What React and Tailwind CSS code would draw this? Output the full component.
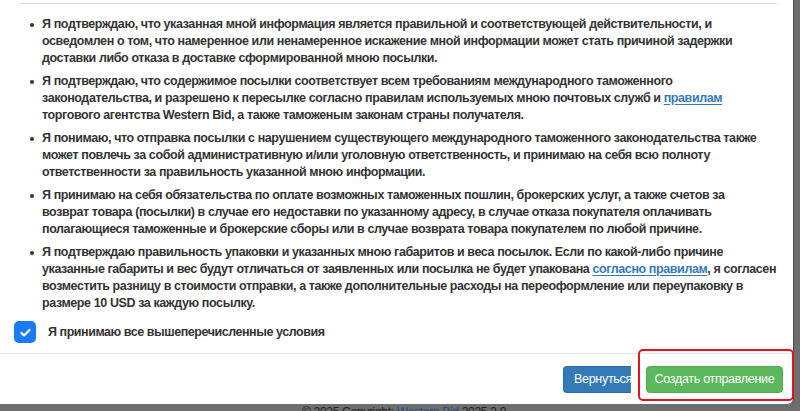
import React from "react";

const Link = ({ children }) => (
  <a href="#" className="text-[#337ab7] underline underline-offset-2">
    {children}
  </a>
);

// each item is kept with the same line breaks as the form
const items = [
  [
    "Я подтверждаю, что указанная мной информация является правильной и соответствующей действительности, и",
    "осведомлен о том, что намеренное или ненамеренное искажение мной информации может стать причиной задержки",
    "доставки либо отказа в доставке сформированной мною посылки.",
  ],
  [
    "Я подтверждаю, что содержимое посылки соответствует всем требованиям международного таможенного",
    <>законодательства, и разрешено к пересылке согласно правилам используемых мною почтовых служб и <Link>правилам</Link></>,
    "торгового агентства Western Bid, а также таможеным законам страны получателя.",
  ],
  [
    "Я понимаю, что отправка посылки с нарушением существующего международного таможенного законодательства также",
    "может повлечь за собой административную и/или уголовную ответственность, и принимаю на себя всю полноту",
    "ответственности за правильность указанной мною информации.",
  ],
  [
    "Я принимаю на себя обязательства по оплате возможных таможенных пошлин, брокерских услуг, а также счетов за",
    "возврат товара (посылки) в случае его недоставки по указанному адресу, в случае отказа покупателя оплачивать",
    "полагающиеся таможенные и брокерские сборы или в случае возврата товара покупателем по любой причине.",
  ],
  [
    "Я подтверждаю правильность упаковки и указанных мною габаритов и веса посылок. Если по какой-либо причине",
    <>указанные габариты и вес будут отличаться от заявленных или посылка не будет упакована <Link>согласно правилам</Link>, я согласен</>,
    "возместить разницу в стоимости отправки, а также дополнительные расходы на переоформление или переупаковку в",
    "размере 10 USD за каждую посылку.",
  ],
];

export default function App() {
  return (
    <div
      className="w-[800px] h-[411px] overflow-hidden bg-[#6e6e6e] flex flex-col"
      style={{ fontFamily: "'Liberation Sans', Arial, sans-serif" }}
    >
      <div className="flex h-[404px] shrink-0">
        <div className="relative w-[794px] h-[404px] bg-white rounded-br-[6px] border-r border-[#4a4a4a] flex flex-col">
          <div className="h-[3px]" />
          <div className="ml-[20px] w-[757px] border-t border-[#dddddd]" />

          <ul className="mt-[12px] flex flex-col gap-[6px] text-[#333333] text-[12.5px] tracking-[-0.4px] leading-[17px] font-bold">
            {items.map((lines, i) => (
              <li key={i} className="flex">
                <span className="w-[42px] shrink-0 flex justify-end pr-[8px] pt-[7px]">
                  <span className="w-[4px] h-[4px] rounded-full bg-[#333333]" />
                </span>
                <span className="flex flex-col">
                  {lines.map((l, j) => (
                    <span key={j} className="whitespace-nowrap">{l}</span>
                  ))}
                </span>
              </li>
            ))}
          </ul>

          <label className="mt-[9px] ml-[14px] flex items-center gap-[12px]">
            <span className="w-[22px] h-[22px] rounded-[5px] bg-[#1a7cf5] flex items-center justify-center">
              <svg width="13" height="13" viewBox="0 0 16 16" fill="none">
                <path d="M3 8.5l3.2 3.2L13 4.8" stroke="white" strokeWidth="2.6" strokeLinecap="round" strokeLinejoin="round" />
              </svg>
            </span>
            <span className="text-[12.5px] tracking-[-0.45px] font-bold text-[#333333]">
              Я принимаю все вышеперечисленные условия
            </span>
          </label>

          <div className="mt-[10px] border-t border-[#e5e5e5]" />

          <div className="mt-[12px] flex justify-end items-start pr-[10px] text-[12.5px] tracking-[-0.3px]">
            <button className="w-[68px] h-[27px] pl-[10px] text-left whitespace-nowrap overflow-hidden rounded-l-[4px] bg-[#337ab7] border border-r-0 border-[#2e6da4] text-white">
              Вернуться
            </button>
            <div className="w-[15px]" />
            <button className="w-[137px] h-[27px] rounded-[4px] bg-[#5cb85c] border border-[#4cae4c] text-white">
              Создать отправление
            </button>
          </div>

          <div className="absolute left-[638px] top-[349px] w-[156px] h-[52px] border-2 border-[#e3141b] rounded-[5px]" />
        </div>
      </div>

      <div className="mt-[1px] text-[12px] tracking-[-0.3px] leading-[14px] text-[#1f1f1f] pl-[302px]">
        © 2025 Copyright: <span className="text-[#1d4f8f]">Western Bid</span> 2025 2.0
      </div>
    </div>
  );
}
